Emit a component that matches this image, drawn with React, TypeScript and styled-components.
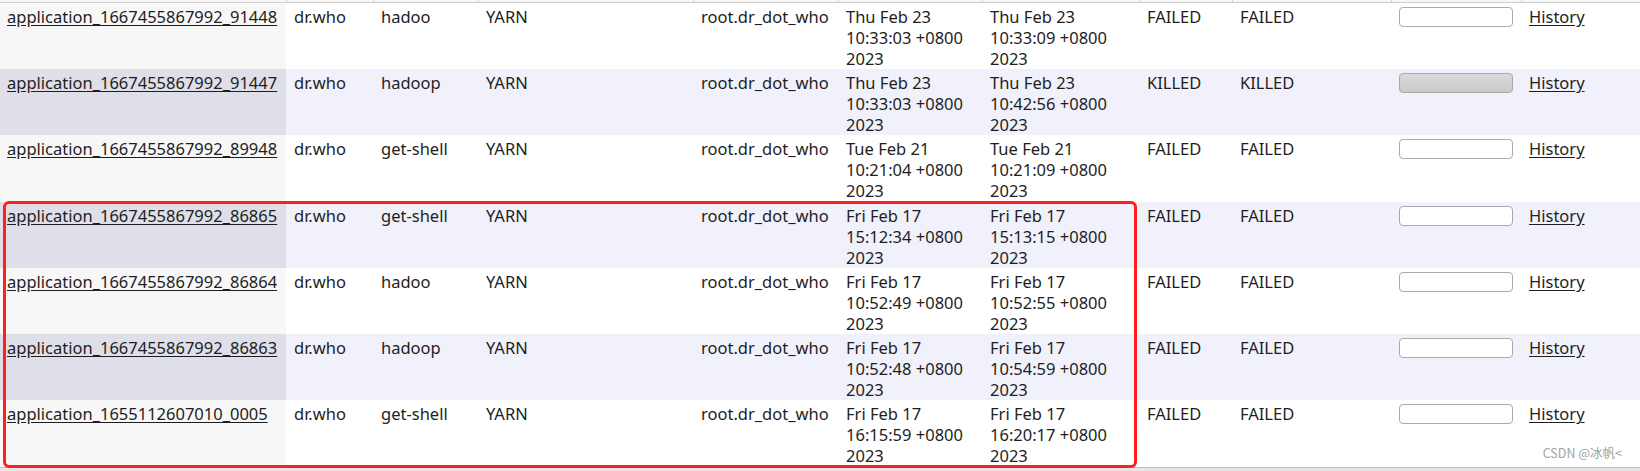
import React from "react";
import styled, { createGlobalStyle } from "styled-components";

const GlobalStyle = createGlobalStyle`
  html, body {
    margin: 0;
    padding: 0;
    background: #ffffff;
  }
  body {
    font-family: "Noto Sans", "Noto Sans CJK SC", sans-serif;
    color: #1e1e1e;
  }
`;

type AppRow = {
  id: string;
  user: string;
  name: string;
  type: string;
  queue: string;
  start: string[];
  finish: string[];
  state: string;
  final: string;
  killed?: boolean;
};

const rows: AppRow[] = [
  {
    id: "application_1667455867992_91448",
    user: "dr.who",
    name: "hadoo",
    type: "YARN",
    queue: "root.dr_dot_who",
    start: ["Thu Feb 23", "10:33:03 +0800", "2023"],
    finish: ["Thu Feb 23", "10:33:09 +0800", "2023"],
    state: "FAILED",
    final: "FAILED",
  },
  {
    id: "application_1667455867992_91447",
    user: "dr.who",
    name: "hadoop",
    type: "YARN",
    queue: "root.dr_dot_who",
    start: ["Thu Feb 23", "10:33:03 +0800", "2023"],
    finish: ["Thu Feb 23", "10:42:56 +0800", "2023"],
    state: "KILLED",
    final: "KILLED",
    killed: true,
  },
  {
    id: "application_1667455867992_89948",
    user: "dr.who",
    name: "get-shell",
    type: "YARN",
    queue: "root.dr_dot_who",
    start: ["Tue Feb 21", "10:21:04 +0800", "2023"],
    finish: ["Tue Feb 21", "10:21:09 +0800", "2023"],
    state: "FAILED",
    final: "FAILED",
  },
  {
    id: "application_1667455867992_86865",
    user: "dr.who",
    name: "get-shell",
    type: "YARN",
    queue: "root.dr_dot_who",
    start: ["Fri Feb 17", "15:12:34 +0800", "2023"],
    finish: ["Fri Feb 17", "15:13:15 +0800", "2023"],
    state: "FAILED",
    final: "FAILED",
  },
  {
    id: "application_1667455867992_86864",
    user: "dr.who",
    name: "hadoo",
    type: "YARN",
    queue: "root.dr_dot_who",
    start: ["Fri Feb 17", "10:52:49 +0800", "2023"],
    finish: ["Fri Feb 17", "10:52:55 +0800", "2023"],
    state: "FAILED",
    final: "FAILED",
  },
  {
    id: "application_1667455867992_86863",
    user: "dr.who",
    name: "hadoop",
    type: "YARN",
    queue: "root.dr_dot_who",
    start: ["Fri Feb 17", "10:52:48 +0800", "2023"],
    finish: ["Fri Feb 17", "10:54:59 +0800", "2023"],
    state: "FAILED",
    final: "FAILED",
  },
  {
    id: "application_1655112607010_0005",
    user: "dr.who",
    name: "get-shell",
    type: "YARN",
    queue: "root.dr_dot_who",
    start: ["Fri Feb 17", "16:15:59 +0800", "2023"],
    finish: ["Fri Feb 17", "16:20:17 +0800", "2023"],
    state: "FAILED",
    final: "FAILED",
  },
];

const widths = [286, 87, 105, 215, 145, 144, 157, 93, 159, 130, 119];

const Page = styled.div`
  position: relative;
  width: 1640px;
`;

const Table = styled.table`
  width: 1640px;
  border-collapse: collapse;
  table-layout: fixed;
  font-size: 16.5px;
`;

const HeadCell = styled.th`
  height: 2px;
  padding: 0;
  background: #f6f6f6;
  border-right: 1px solid #d6d6d6;
  border-bottom: 1px solid #cfcfcf;
  &:last-child {
    border-right: none;
  }
`;

const Row = styled.tr<{ $even: boolean }>`
  height: 66.3px;
  background: ${(p) => (p.$even ? "#f1f1fb" : "#ffffff")};
`;

const Cell = styled.td<{ $first?: boolean; $even?: boolean }>`
  vertical-align: top;
  padding: 3px 8px 0 ${(p) => (p.$first ? "7px" : "8px")};
  line-height: 21px;
  white-space: nowrap;
  overflow: hidden;
  background: ${(p) =>
    p.$first ? (p.$even ? "#dfdfe9" : "#f7f7f7") : "transparent"};
`;

const Link = styled.a`
  color: #1e1e1e;
  text-decoration: underline;
  text-underline-offset: 2px;
  cursor: pointer;
`;

const Line = styled.span`
  display: block;
`;

const Progress = styled.div<{ $filled: boolean }>`
  width: 112px;
  height: 18px;
  margin-top: 1px;
  border: 1px solid #aaaaaa;
  border-radius: 4px;
  background: ${(p) =>
    p.$filled ? "linear-gradient(#dadada, #c9c9c9)" : "#ffffff"};
`;

const Footer = styled.div`
  height: 4px;
  border-top: 1px solid #bdbdbd;
  background: #e6e6e6;
`;

const Highlight = styled.div`
  position: absolute;
  left: 3px;
  top: 201px;
  width: 1128px;
  height: 261px;
  border: 3px solid #ff1f1f;
  border-radius: 6px;
  pointer-events: none;
`;

const Watermark = styled.div`
  position: absolute;
  right: 18px;
  bottom: 10px;
  font-family: "Noto Sans CJK SC", "Noto Sans", sans-serif;
  font-size: 12.5px;
  color: #a2a2a2;
`;

function DateLines({ lines }: { lines: string[] }) {
  return (
    <>
      {lines.map((l, i) => (
        <Line key={i}>{l}</Line>
      ))}
    </>
  );
}

export default function App() {
  return (
    <Page>
      <GlobalStyle />
      <Table>
        <colgroup>
          {widths.map((w, i) => (
            <col key={i} style={{ width: w }} />
          ))}
        </colgroup>
        <thead>
          <tr>
            {widths.map((_, i) => (
              <HeadCell key={i} />
            ))}
          </tr>
        </thead>
        <tbody>
          {rows.map((r, i) => {
            const even = i % 2 === 1;
            return (
              <Row key={r.id} $even={even}>
                <Cell $first $even={even}>
                  <Link>{r.id}</Link>
                </Cell>
                <Cell>{r.user}</Cell>
                <Cell>{r.name}</Cell>
                <Cell>{r.type}</Cell>
                <Cell>{r.queue}</Cell>
                <Cell>
                  <DateLines lines={r.start} />
                </Cell>
                <Cell>
                  <DateLines lines={r.finish} />
                </Cell>
                <Cell>{r.state}</Cell>
                <Cell>{r.final}</Cell>
                <Cell>
                  <Progress $filled={!!r.killed} />
                </Cell>
                <Cell>
                  <Link>History</Link>
                </Cell>
              </Row>
            );
          })}
        </tbody>
      </Table>
      <Footer />
      <Highlight />
      <Watermark>CSDN @冰帆&lt;</Watermark>
    </Page>
  );
}
